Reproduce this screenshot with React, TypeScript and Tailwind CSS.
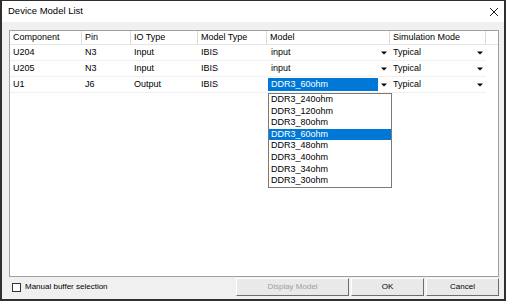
import React from 'react';

const font = { fontFamily: '"Liberation Sans", Arial, sans-serif' };

const cols = [
  { key: 'comp', label: 'Component', w: 'w-[72px]' },
  { key: 'pin', label: 'Pin', w: 'w-[49px]' },
  { key: 'io', label: 'IO Type', w: 'w-[67px]' },
  { key: 'mt', label: 'Model Type', w: 'w-[69px]' },
  { key: 'model', label: 'Model', w: 'w-[123px]' },
  { key: 'sim', label: 'Simulation Mode', w: 'w-[96px]' },
];

const rows = [
  { comp: 'U204', pin: 'N3', io: 'Input', mt: 'IBIS', model: 'input', sim: 'Typical' },
  { comp: 'U205', pin: 'N3', io: 'Input', mt: 'IBIS', model: 'input', sim: 'Typical' },
  { comp: 'U1', pin: 'J6', io: 'Output', mt: 'IBIS', model: 'DDR3_60ohm', sim: 'Typical', open: true },
];

const options = [
  'DDR3_240ohm',
  'DDR3_120ohm',
  'DDR3_80ohm',
  'DDR3_60ohm',
  'DDR3_48ohm',
  'DDR3_40ohm',
  'DDR3_34ohm',
  'DDR3_30ohm',
];

const Arrow = () => (
  <svg width="6" height="4" viewBox="0 0 6 4">
    <path d="M0 0.5 H6 L3 3.5 Z" fill="#000" />
  </svg>
);

const Combo: React.FC<{ value: string; selected?: boolean }> = ({ value, selected }) => (
  <div className="flex h-full items-stretch py-px">
    <div className={`flex flex-1 items-center pl-[3px] ${selected ? 'bg-[#0078d7] text-white' : ''}`}>
      {value}
    </div>
    <div className="flex w-[12px] items-center justify-center">
      <Arrow />
    </div>
  </div>
);

const btn =
  'flex items-center justify-center border border-t-white border-l-white border-r-[#6d6d6d] border-b-[#6d6d6d] bg-[#e9e9e9]';

export default function App() {
  return (
    <div
      className="flex h-[301px] w-[506px] flex-col border-x-2 border-t border-b-2 border-[#2f2f2f] bg-[#f0f0f0] text-[9px] text-black"
      style={font}
    >
      {/* Title bar */}
      <div className="flex h-[21px] shrink-0 items-center justify-between bg-white pl-[6px] pr-[5px]">
        <span className="text-[9.5px]">Device Model List</span>
        <svg width="10" height="10" viewBox="0 0 10 10">
          <path d="M1 1 L9 9 M9 1 L1 9" stroke="#222" strokeWidth="1" />
        </svg>
      </div>

      <div className="flex flex-1 flex-col pt-[8px] pr-[5px] pb-[3px] pl-[7px]">
        {/* Grid panel */}
        <div className="relative h-[247px] border border-[#a0a0a0] bg-white">
          <div className="flex h-[14px] border-b border-[#e5e5e5]">
            {cols.map((c) => (
              <div key={c.key} className={`${c.w} flex items-center border-r border-[#dcdcdc] pl-[3px]`}>
                {c.label}
              </div>
            ))}
          </div>
          {rows.map((r, i) => (
            <div key={i} className="flex h-[16px] w-[476px] border-b border-[#f0f0f0]">
              <div className="flex w-[72px] items-center pl-[3px]">{r.comp}</div>
              <div className="flex w-[49px] items-center pl-[3px]">{r.pin}</div>
              <div className="flex w-[67px] items-center pl-[3px]">{r.io}</div>
              <div className="flex w-[69px] items-center pl-[3px]">{r.mt}</div>
              <div className="w-[123px] pl-px">
                <Combo value={r.model} selected={r.open} />
              </div>
              <div className="w-[96px]">
                <Combo value={r.sim} />
              </div>
            </div>
          ))}

          {/* Open dropdown */}
          <div className="absolute top-[62px] left-[258px] w-[124px] border border-[#7a7a7a] bg-white">
            {options.map((o) => (
              <div
                key={o}
                className={`flex h-[11.6px] items-center pl-[2px] ${o === 'DDR3_60ohm' ? 'bg-[#0078d7] text-white' : ''}`}
              >
                {o}
              </div>
            ))}
          </div>
        </div>

        {/* Bottom bar */}
        <div className="mt-px flex h-[18px] items-center justify-between text-[8px]">
          <label className="flex items-center gap-[4px] pl-[3px]">
            <span className="h-[9px] w-[9px] border border-[#333] bg-white" />
            <span>Manual buffer selection</span>
          </label>
          <div className="flex h-full gap-[2px]">
            <button className={`${btn} w-[113px] text-[#a0a0a0]`}>Display Model</button>
            <button className={`${btn} w-[73px]`}>OK</button>
            <button className={`${btn} w-[73px]`}>Cancel</button>
          </div>
        </div>
      </div>
    </div>
  );
}
